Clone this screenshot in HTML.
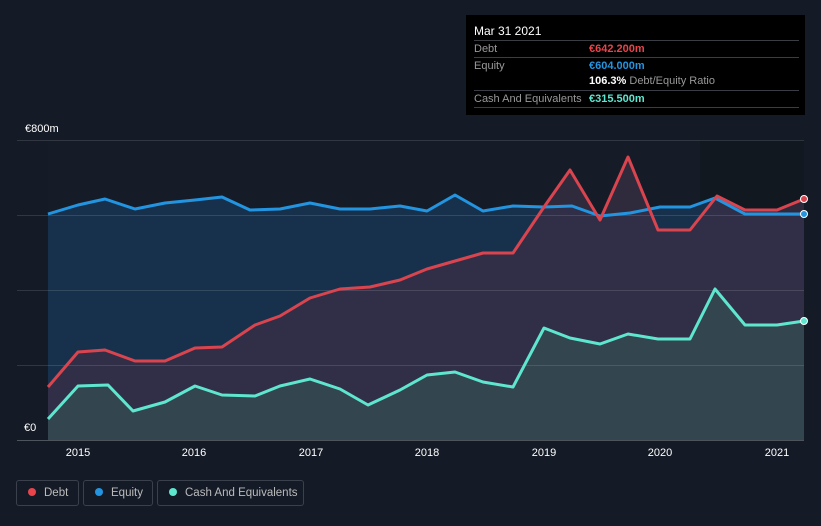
<!DOCTYPE html>
<html><head><meta charset="utf-8"><style>
body{margin:0;width:821px;height:526px;background:#151b26;font-family:"Liberation Sans",sans-serif;overflow:hidden;position:relative}
.tt{position:absolute;left:466px;top:15px;width:339px;height:100px;background:#000;color:#fff;font-size:11px}
.row{position:absolute;left:8px;right:6px;border-top:1px solid #3a3d44;height:16px;line-height:16px}
.lab{color:#999;position:absolute;left:0}
.val{position:absolute;left:115px;font-weight:bold}
.leg{position:absolute;top:480px;height:26px;border:1px solid #3a404c;border-radius:3px;color:#bbb;font-size:11.5px;line-height:24px;box-sizing:border-box;white-space:nowrap;overflow:hidden}
.dot{display:inline-block;width:8px;height:8px;border-radius:50%;margin:0 8px 0 11px;vertical-align:0px}
.yl{position:absolute;color:#fff;font-size:11px}
.xl{position:absolute;top:447px;color:#fff;font-size:11px;width:40px;text-align:center}
</style></head><body>
<svg width="821" height="526" style="position:absolute;left:0;top:0">
<rect x="48" y="140" width="756" height="300" fill="#161c27"/>
<rect x="700" y="140" width="104" height="300" fill="#11151c" opacity=".6"/>
<polygon fill="#173451" opacity=".9" points="48,440 48,214 78,205 105,199 135,209 165,203 195,200 222,197 250,210 280,209 310,203 340,209 370,209 400,206 427,211 455,195 483,211 513,206 544,207 572,206 600,216 630,213 660,207 690,207 715,198 745,214 777,214 804,214 804,440"/>
<polygon fill="#3a2f45" opacity=".75" points="48,440 48,387 78,352 105,350 135,361 165,361 195,348 222,347 255,325 280,316 310,298 340,289 370,287 400,280 427,269 455,261 483,253 513,253 544,207 570,170 600,220 628,157 658,230 690,230 717,196 745,210 777,210 804,199 804,440"/>
<polygon fill="#34484f" opacity=".9" points="48,440 48,419 78,386 108,385 133,411 165,402 195,386 222,395 255,396 280,386 310,379 340,389 368,405 400,390 427,375 455,372 483,382 513,387 544,328 570,338 600,344 628,334 658,339 690,339 715,289 745,325 777,325 804,321 804,440"/>
<g stroke="#ffffff" stroke-opacity=".12" stroke-width="1">
<line x1="17" y1="140.5" x2="804" y2="140.5"/><line x1="17" y1="215.5" x2="804" y2="215.5"/><line x1="17" y1="290.5" x2="804" y2="290.5"/><line x1="17" y1="365.5" x2="804" y2="365.5"/><line x1="17" y1="440.5" x2="804" y2="440.5" stroke-opacity=".25"/>
</g>
<g fill="none" stroke-width="3" stroke-linejoin="round">
<polyline stroke="#2394e0" points="48,214 78,205 105,199 135,209 165,203 195,200 222,197 250,210 280,209 310,203 340,209 370,209 400,206 427,211 455,195 483,211 513,206 544,207 572,206 600,216 630,213 660,207 690,207 715,198 745,214 777,214 804,214"/>
<polyline stroke="#d9444f" points="48,387 78,352 105,350 135,361 165,361 195,348 222,347 255,325 280,316 310,298 340,289 370,287 400,280 427,269 455,261 483,253 513,253 544,207 570,170 600,220 628,157 658,230 690,230 717,196 745,210 777,210 804,199"/>
<polyline stroke="#5ee6cf" points="48,419 78,386 108,385 133,411 165,402 195,386 222,395 255,396 280,386 310,379 340,389 368,405 400,390 427,375 455,372 483,382 513,387 544,328 570,338 600,344 628,334 658,339 690,339 715,289 745,325 777,325 804,321"/>
</g>
<circle cx="804" cy="199" r="3.5" fill="#d9444f" stroke="#fff" stroke-width="1"/>
<circle cx="804" cy="214" r="3.5" fill="#2394e0" stroke="#fff" stroke-width="1"/>
<circle cx="804" cy="321" r="3.5" fill="#5ee6cf" stroke="#fff" stroke-width="1"/>
</svg>
<div class="yl" style="left:25px;top:123px">€800m</div>
<div class="yl" style="left:24px;top:422px">€0</div>
<div class="xl" style="left:58px">2015</div><div class="xl" style="left:174px">2016</div><div class="xl" style="left:291px">2017</div><div class="xl" style="left:407px">2018</div><div class="xl" style="left:524px">2019</div><div class="xl" style="left:640px">2020</div><div class="xl" style="left:757px">2021</div>
<div class="tt">
<div style="position:absolute;left:8px;top:9px;font-size:12px">Mar 31 2021</div>
<div class="row" style="top:25px"><span class="lab">Debt</span><span class="val" style="color:#e8444b">€642.200m</span></div>
<div class="row" style="top:42px"><span class="lab">Equity</span><span class="val" style="color:#2394e0">€604.000m</span></div>
<div class="row" style="top:58px;border-top:none"><span class="val" style="color:#fff">106.3% <span style="color:#999;font-weight:normal">Debt/Equity Ratio</span></span></div>
<div class="row" style="top:75px"><span class="lab">Cash And Equivalents</span><span class="val" style="color:#5ee6cf">€315.500m</span></div>
<div class="row" style="top:92px;height:0"></div>
</div>
<div class="leg" style="left:16px;width:63px"><span class="dot" style="background:#e8444b"></span>Debt</div>
<div class="leg" style="left:83px;width:70px"><span class="dot" style="background:#2394e0"></span>Equity</div>
<div class="leg" style="left:157px;width:147px"><span class="dot" style="background:#5ee6cf"></span>Cash And Equivalents</div>
</body></html>
